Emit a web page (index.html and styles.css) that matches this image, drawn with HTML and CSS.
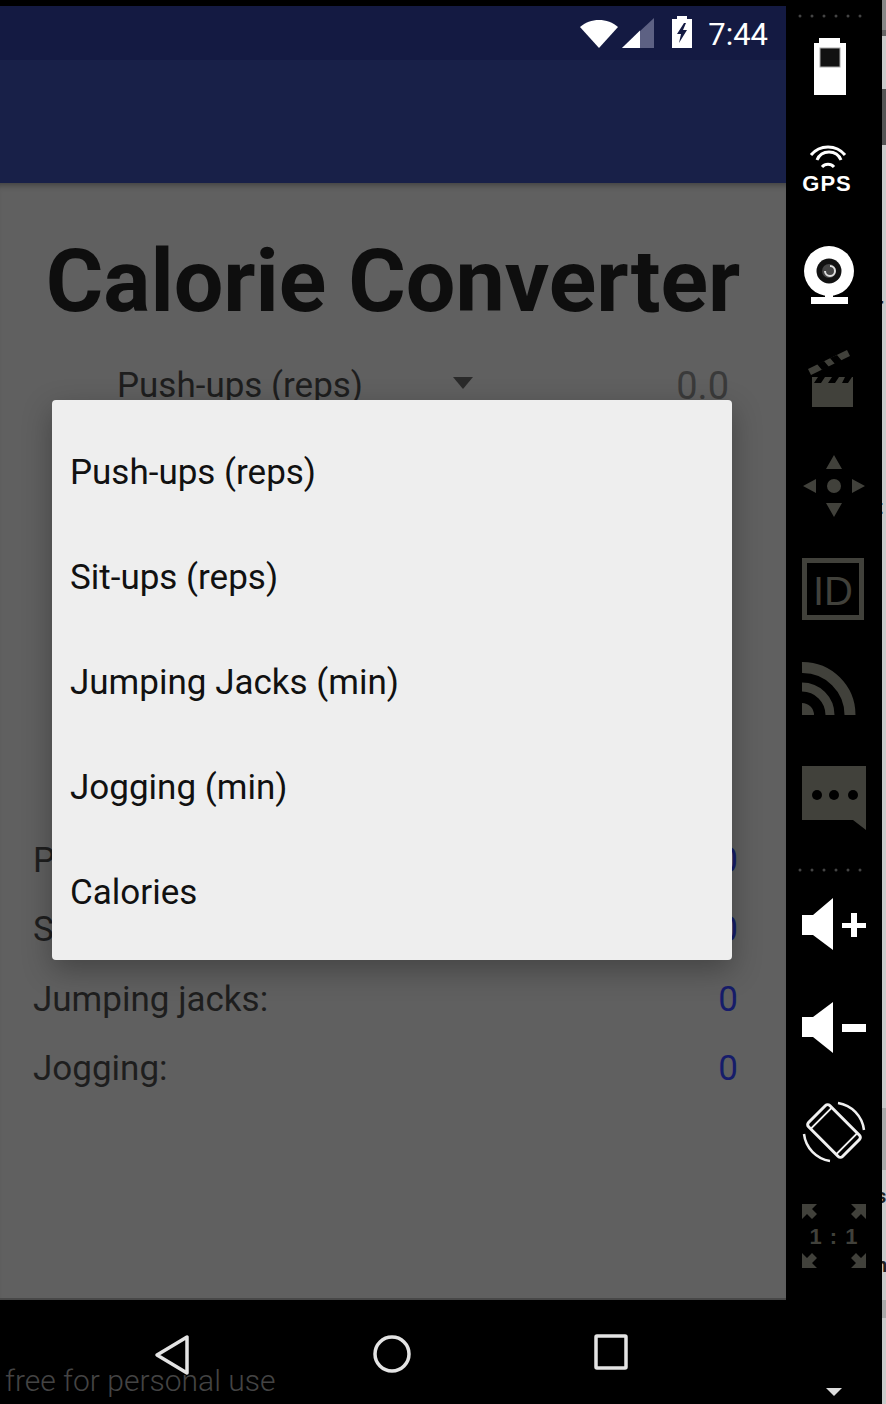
FILE: index.html
```html
<!DOCTYPE html>
<html lang="en">
<head>
    <meta charset="UTF-8">
    <title>Calorie Converter</title>
    <link rel="stylesheet" href="styles.css">
</head>
<body>
    <div class="emulator">
        <div class="phone">
            <div class="status-bar">
                <svg class="status-wifi" width="38" height="28" viewBox="0 0 38 28"><path d="M0 7C5 2.500 12 0 19 0s14 2.500 19 7L19 28z" fill="#fff"/></svg>
                <svg class="status-signal" width="32" height="30" viewBox="0 0 32 30"><path d="M32 0V30H0z" fill="#5d6183"/><path d="M18 12.400V30H0z" fill="#fff"/></svg>
                <svg class="status-battery" width="20" height="32" viewBox="0 0 20 32"><path d="M5 0h10v3h5v29H0V3h5z" fill="#fff"/><path d="M12 7L5 18h4l-2 9 8-13h-4l3-7z" fill="#141a42"/></svg>
                <span class="status-time">7:44</span>
            </div>
            <div class="app-bar"></div>
            <div class="content">
                <h1>Calorie Converter</h1>
                <div class="spinner-row">
                    <span class="spinner-label">Push-ups (reps)</span>
                    <span class="spinner-caret"></span>
                    <span class="spinner-value">0.0</span>
                </div>
                <div class="result-list">
                    <div class="result-row"><span>Push-ups:</span><span class="result-value">0</span></div>
                    <div class="result-row"><span>Sit-ups:</span><span class="result-value">0</span></div>
                    <div class="result-row"><span>Jumping jacks:</span><span class="result-value">0</span></div>
                    <div class="result-row"><span>Jogging:</span><span class="result-value">0</span></div>
                </div>
                <div class="dialog">
                    <div class="dialog-item">Push-ups (reps)</div>
                    <div class="dialog-item">Sit-ups (reps)</div>
                    <div class="dialog-item">Jumping Jacks (min)</div>
                    <div class="dialog-item">Jogging (min)</div>
                    <div class="dialog-item">Calories</div>
                </div>
            </div>
            <div class="nav-bar">
                <svg width="38" height="42" viewBox="0 0 38 42"><path d="M34 3V39L4 21z" fill="none" stroke="#e4e4e4" stroke-width="3.500" stroke-linejoin="round"/></svg>
                <svg width="40" height="40" viewBox="0 0 40 40"><circle cx="20" cy="20" r="17" fill="none" stroke="#e4e4e4" stroke-width="3.500"/></svg>
                <svg width="34" height="36" viewBox="0 0 34 36"><rect x="2" y="2" width="30" height="32" rx="1" fill="none" stroke="#e4e4e4" stroke-width="3.500"/></svg>
                <span class="watermark">free for personal use</span>
            </div>
        </div>

        <div class="side-panel">
            <svg width="96" height="30" viewBox="786 0 96 30"><g fill="#444"><circle cx="800" cy="16" r="1.500"/><circle cx="812" cy="16" r="1.500"/><circle cx="824" cy="16" r="1.500"/><circle cx="836" cy="16" r="1.500"/><circle cx="848" cy="16" r="1.500"/><circle cx="860" cy="16" r="1.500"/></g></svg>
            <svg width="96" height="90" viewBox="786 30 96 90"><path d="M819 38h21v5h6v52h-32V43h5z" fill="#fff"/><rect x="820" y="48" width="20" height="19" fill="#111" stroke="#aaa"/></svg>
            <svg width="96" height="110" viewBox="786 120 96 110"><g fill="none" stroke="#fff" stroke-width="3"><path d="M811 155a22 22 0 0 1 34 0"/><path d="M817 160a13 13 0 0 1 24 0"/><path d="M822 167a8 8 0 0 1 12 0"/></g><text class="panel-gps" x="827" y="191" text-anchor="middle">GPS</text></svg>
            <svg width="96" height="100" viewBox="786 230 96 100"><circle cx="829" cy="271" r="25" fill="#fff"/><circle cx="829" cy="271" r="12.500" fill="#111"/><circle cx="829" cy="271" r="7" fill="#444"/><path d="M830 266a5 5 0 1 1-5 5" fill="none" stroke="#ddd" stroke-width="2"/><rect x="825" y="294" width="8" height="5" fill="#fff"/><rect x="811" y="297" width="37" height="7" fill="#fff"/></svg>
            <svg width="96" height="100" viewBox="786 330 96 100"><path d="M812 377h41v30h-41z" fill="#41413b"/><path d="M808 369l39-19 3 6-39 19z" fill="#41413b"/><path d="M817 364l7-3 5 6-7 3zM830 358l7-3 5 6-7 3zM818 377h7l-4 6h-7zM832 377h7l-4 6h-7zM845 377h7l-4 6h-6z" fill="#000"/></svg>
            <svg width="96" height="110" viewBox="786 430 96 110"><g fill="#41413b"><circle cx="834" cy="486" r="7"/><path d="M834 455l8 14h-16zM834 517l-8-14h16zM803 486l13-7v14zM865 486l-13-7v14z"/></g></svg>
            <svg width="96" height="100" viewBox="786 540 96 100"><rect x="804.500" y="560.500" width="57" height="57" fill="none" stroke="#41413b" stroke-width="5"/><text class="panel-id" x="833" y="605" text-anchor="middle">ID</text></svg>
            <svg width="96" height="100" viewBox="786 640 96 100"><g fill="none" stroke="#41413b"><path d="M802 667.500a47.500 47.500 0 0 1 48 47.500" stroke-width="11"/><path d="M802 687a28 28 0 0 1 28 28" stroke-width="9"/></g><path d="M802 703a12 12 0 0 1 12 12h-12z" fill="#41413b"/></svg>
            <svg width="96" height="110" viewBox="786 740 96 110"><path d="M802 766h64v64l-13-10h-51z" fill="#41413b"/><g fill="#000"><circle cx="817" cy="795" r="5"/><circle cx="834" cy="795" r="5"/><circle cx="853" cy="795" r="5"/></g></svg>
            <svg width="96" height="40" viewBox="786 850 96 40"><g fill="#444"><circle cx="800" cy="870" r="1.500"/><circle cx="812" cy="870" r="1.500"/><circle cx="824" cy="870" r="1.500"/><circle cx="836" cy="870" r="1.500"/><circle cx="848" cy="870" r="1.500"/><circle cx="860" cy="870" r="1.500"/></g></svg>
            <svg width="96" height="80" viewBox="786 890 96 80"><path d="M802 915h11l20-17v52l-20-15h-11z" fill="#fff"/><path d="M842 923h9v-10h6v10h9v5h-9v9h-6v-9h-9z" fill="#fff"/></svg>
            <svg width="96" height="110" viewBox="786 970 96 110"><path d="M802 1017h11l20-15v51l-20-16h-11z" fill="#fff"/><rect x="842" y="1024" width="24" height="8" fill="#fff"/></svg>
            <svg width="96" height="100" viewBox="786 1080 96 100"><g fill="none" stroke="#f0f0f0"><g transform="rotate(-45 834 1131)"><rect x="819" y="1107" width="30" height="48" rx="3" stroke-width="3"/><path d="M819 1113h30M819 1149h30" stroke-width="2"/></g><path d="M838 1103a31 31 0 0 1 26 27" stroke-width="2.500"/><path d="M830 1161a31 31 0 0 1-26-27" stroke-width="2.500"/></g></svg>
            <svg width="96" height="110" viewBox="786 1180 96 110"><path d="M802 1204H817L812 1209 817 1214 812 1219 807 1214 802 1219zM866 1204H851L856 1209 851 1214 856 1219 861 1214 866 1219zM802 1268H817L812 1263 817 1258 812 1253 807 1258 802 1253zM866 1268H851L856 1263 851 1258 856 1253 861 1258 866 1253z" fill="#41413b"/><text class="panel-ratio" x="834" y="1244" text-anchor="middle">1 : 1</text></svg>
            <svg width="96" height="114" viewBox="786 1290 96 114"><path d="M826 1388h16l-8 8z" fill="#ddd"/></svg>
        </div>

        <div class="edge-strip">
            <div class="edge edge-top"></div>
            <div class="edge edge-line"></div>
            <div class="edge edge-light edge-short"></div>
            <div class="edge edge-dark"></div>
            <div class="edge edge-light edge-long">
                <span class="edge-char edge-r">r</span>
                <span class="edge-char edge-t">t</span>
            </div>
            <div class="edge edge-gray"></div>
            <div class="edge edge-light edge-chars"><span class="edge-char edge-s">s</span><span class="edge-char edge-h">h</span></div>
            <div class="edge edge-gray edge-thin"></div>
            <div class="edge edge-light edge-end"></div>
        </div>
    </div>
</body>
</html>
```
FILE: styles.css
```css
* {
    box-sizing: border-box;
}
html, body {
    margin: 0;
    padding: 0;
    background: #000;
}
body {
    width: 886px;
    height: 1404px;
    overflow: hidden;
    font-family: Roboto, sans-serif;
}
.emulator {
    display: flex;
    height: 1404px;
}
.phone {
    width: 786px;
    padding-top: 6px;
    display: flex;
    flex-direction: column;
}

/* status bar */
.status-bar {
    height: 54px;
    background: #141a42;
    display: flex;
    align-items: flex-start;
    padding: 10px 18px 0 0;
    justify-content: flex-end;
}
.status-wifi {
    margin: 4px 4px 0 0;
}
.status-signal {
    margin: 2px 18px 0 0;
}
.status-battery {
    margin-right: 16px;
}
.status-time {
    color: #fff;
    font-size: 31px;
    line-height: 36px;
    margin-top: 1px;
}
.app-bar {
    height: 123px;
    background: #182048;
}

/* main area, dimmed by the dialog */
.content {
    position: relative;
    height: 1117px;
    background: #606060;
    border-bottom: 2px solid #484848;
    box-shadow: inset 0 7px 6px -5px rgba(0,0,0,0.35);
    padding: 0 48px 0 33px;
}
h1 {
    margin: 49px 0 0 -33px;
    width: 786px;
    text-align: center;
    font-size: 88px;
    line-height: 98px;
    font-weight: 700;
    color: #0e0e0e;
    white-space: nowrap;
}
.spinner-row {
    display: flex;
    align-items: center;
    margin-top: 34px;
    font-size: 35px;
    line-height: 44px;
    color: #1e1e1e;
    padding-left: 84px;
}
.spinner-caret {
    width: 0;
    height: 0;
    margin: 0 0 6px 90px;
    border-left: 10px solid transparent;
    border-right: 10px solid transparent;
    border-top: 12px solid #2a2a2a;
}
.spinner-value {
    margin-left: auto;
    margin-right: 9px;
    font-size: 38px;
    color: #3a3a3a;
}
.result-list {
    margin-top: 430.500px;
}
.result-row {
    display: flex;
    justify-content: space-between;
    height: 69.500px;
    font-size: 35px;
    line-height: 44px;
    color: #1e1e1e;
}
.result-value {
    color: #161c6a;
}

.dialog {
    position: absolute;
    left: 52px;
    top: 217px;
    width: 680px;
    height: 560px;
    background: #eee;
    border-radius: 4px;
    padding-top: 20px;
    box-shadow: 0 10px 30px rgba(0,0,0,0.3);
}
.dialog-item {
    height: 105px;
    line-height: 105px;
    padding-left: 18px;
    font-size: 35px;
    color: #111;
}

/* navigation bar */
.nav-bar {
    position: relative;
    flex: 1;
    background: #000;
    display: flex;
    align-items: flex-start;
    padding-top: 34px;
}
.nav-bar svg:nth-child(1) {
    margin-left: 153px;
}
.nav-bar svg:nth-child(2) {
    margin-left: 181px;
}
.nav-bar svg:nth-child(3) {
    margin-left: 182px;
}
.watermark {
    position: absolute;
    left: 5px;
    top: 59px;
    font-size: 30px;
    font-weight: 300;
    line-height: 44px;
    color: #444;
    white-space: nowrap;
}

/* emulator side panel */
.side-panel {
    width: 96px;
    background: #000;
    display: flex;
    flex-direction: column;
}
.side-panel svg {
    display: block;
    flex: none;
}
.panel-gps {
    font-family: "Liberation Sans", sans-serif;
    font-size: 22px;
    font-weight: 700;
    letter-spacing: 1px;
    fill: #fff;
}
.panel-id {
    font-family: "Liberation Sans", sans-serif;
    font-size: 40px;
    fill: #41413b;
}
.panel-ratio {
    font-family: "Liberation Sans", sans-serif;
    font-size: 22px;
    font-weight: 700;
    letter-spacing: 1px;
    fill: #41413b;
}

/* what shows of the window behind the emulator */
.edge-strip {
    width: 4px;
    display: flex;
    flex-direction: column;
    overflow: hidden;
}
.edge {
    position: relative;
    overflow: hidden;
}
.edge-top {
    height: 30px;
    background: #888;
}
.edge-line {
    height: 6px;
    background: #666;
}
.edge-light {
    background: #cacaca;
}
.edge-short {
    height: 53px;
}
.edge-dark {
    height: 56px;
    background: #555;
}
.edge-long {
    height: 963px;
}
.edge-gray {
    height: 62px;
    background: #aaa;
}
.edge-chars {
    height: 130px;
}
.edge-thin {
    height: 18px;
}
.edge-end {
    flex: 1;
}
.edge-char {
    position: absolute;
    left: -6px;
    font-size: 20px;
    line-height: 20px;
    font-weight: 700;
    color: #222;
}
.edge-r {
    top: 150px;
}
.edge-t {
    top: 352px;
}
.edge-s {
    top: 16px;
}
.edge-h {
    top: 85px;
}
```
